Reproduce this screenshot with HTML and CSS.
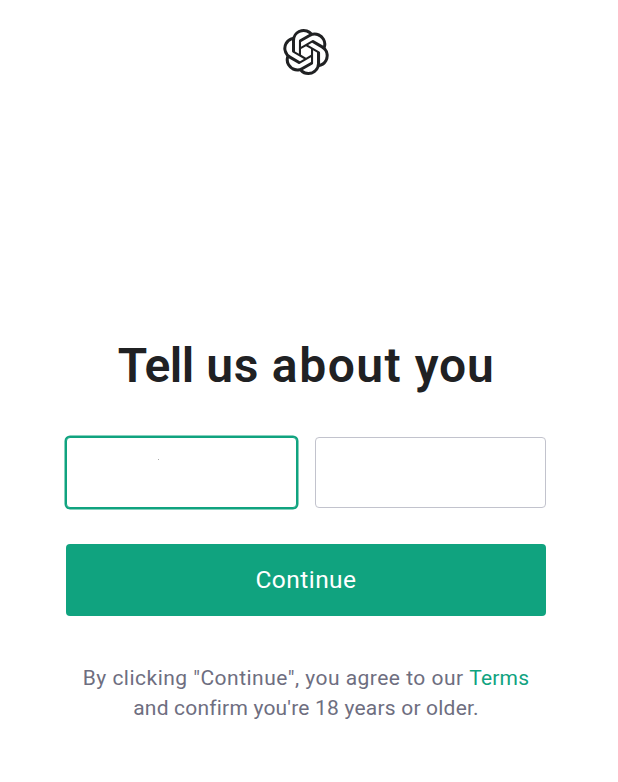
FILE: index.html
```html
<!DOCTYPE html>
<html lang="en">
<head>
<meta charset="utf-8">
<title>Tell us about you</title>
<link rel="stylesheet" href="styles.css">
</head>
<body>
<header class="header">
<svg class="logo" viewBox="0 0 24 24" fill="currentColor" aria-hidden="true"><path d="M22.2819 9.8211a5.9847 5.9847 0 0 0-.5157-4.9108 6.0462 6.0462 0 0 0-6.5098-2.9A6.0651 6.0651 0 0 0 4.9807 4.1818a5.9847 5.9847 0 0 0-3.9977 2.9 6.0462 6.0462 0 0 0 .7427 7.0966 5.98 5.98 0 0 0 .511 4.9107 6.051 6.051 0 0 0 6.5146 2.9001A5.9847 5.9847 0 0 0 13.2599 24a6.0557 6.0557 0 0 0 5.7718-4.2058 5.9894 5.9894 0 0 0 3.9977-2.9001 6.0557 6.0557 0 0 0-.7475-7.073zm-9.022 12.6081a4.4755 4.4755 0 0 1-2.8764-1.0408l.1419-.0804 4.7783-2.7582a.7948.7948 0 0 0 .3927-.6813v-6.7369l2.02 1.1686a.071.071 0 0 1 .038.052v5.5826a4.504 4.504 0 0 1-4.4945 4.4944zm-9.6607-4.1254a4.4708 4.4708 0 0 1-.5346-3.0137l.142.0852 4.783 2.7582a.7712.7712 0 0 0 .7806 0l5.8428-3.3685v2.3324a.0804.0804 0 0 1-.0332.0615L9.74 19.9502a4.4992 4.4992 0 0 1-6.1408-1.6464zM2.3408 7.8956a4.485 4.485 0 0 1 2.3655-1.9728V11.6a.7664.7664 0 0 0 .3879.6765l5.8144 3.3543-2.0201 1.1685a.0757.0757 0 0 1-.071 0l-4.8303-2.7865A4.504 4.504 0 0 1 2.3408 7.872zm16.5963 3.8558L13.1038 8.364 15.1192 7.2a.0757.0757 0 0 1 .071 0l4.8303 2.7913a4.4944 4.4944 0 0 1-.6765 8.1042v-5.6772a.79.79 0 0 0-.407-.667zm2.0107-3.0231l-.142-.0852-4.7735-2.7818a.7759.7759 0 0 0-.7854 0L9.409 9.2297V6.8974a.0662.0662 0 0 1 .0284-.0615l4.8303-2.7866a4.4992 4.4992 0 0 1 6.6802 4.66zM8.3065 12.863l-2.02-1.1638a.0804.0804 0 0 1-.038-.0567V6.0742a4.4992 4.4992 0 0 1 7.3757-3.4537l-.142.0805L8.704 5.459a.7948.7948 0 0 0-.3927.6813zm1.0976-2.3654l2.602-1.4998 2.6069 1.4998v2.9994l-2.5974 1.4997-2.6067-1.4997Z"/></svg>
</header>
<main class="panel">
<h1 class="title"><span class="tight">Tell</span> us <span class="wide">about</span> you</h1>
<form class="form">
<div class="fields">
<input class="field field-active" type="text" aria-label="First name">
<input class="field" type="text" aria-label="Last name">
</div>
<button class="button" type="button">Continue</button>
</form>
<p class="legal"><span class="line line-first">By clicking "Continue", you agree to our <a class="link">Terms</a></span><span class="line line-second">and confirm you're 18 years or older.</span></p>
</main>
</body>
</html>
```
FILE: styles.css
```css
* { box-sizing: border-box; }
body { margin: 0; background: #fff; color: #202123; font-family: Roboto, sans-serif; }
.header { width: 612px; height: 76px; padding-top: 28px; display: flex; justify-content: center; }
.logo { width: 46px; height: 48px; }
.panel { width: 480px; margin: 260px 0 0 66px; }
.title { margin: 0; height: 60px; line-height: 60px; font-size: 48px; font-weight: 600; letter-spacing: .7px; text-align: center; white-space: nowrap; }
.tight { letter-spacing: -.5px; }
.wide { letter-spacing: 1.5px; }
.form { display: flex; flex-direction: column; gap: 36px; margin-top: 41px; }
.fields { display: grid; grid-template-columns: 231px 231px; gap: 18px; }
.field { width: 100%; height: 71px; padding: 0 16px; border: 1px solid #c2c3cd; border-radius: 4px; background: #fff; font: 24px Roboto, sans-serif; outline: none; }
/* The small mark is a one-pixel speck inside the first field. */
.field-active { border-color: #10a37f; box-shadow: 0 0 0 1.5px #10a37f; background: linear-gradient(#aaa, #aaa) 91px 21px / 1px 1px no-repeat #fff; }
.button { height: 72px; padding-bottom: 3px; border: 0; border-radius: 4px; background: #10a37f; color: #fff; font: 24.5px Roboto, sans-serif; letter-spacing: .45px; }
.legal { margin: 47px 0 0; color: #6e6e80; font-size: 21px; line-height: 30px; text-align: center; }
.line { display: block; white-space: nowrap; }
.line-first { letter-spacing: .48px; }
.line-second { letter-spacing: .2px; }
.link { color: #10a37f; letter-spacing: .2px; }
```
